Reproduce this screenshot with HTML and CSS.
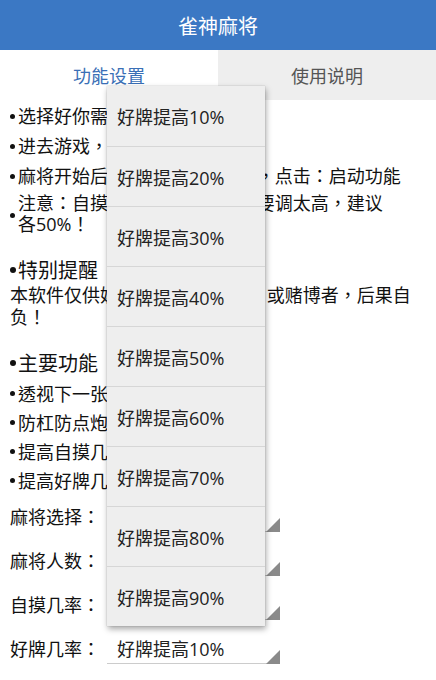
FILE: index.html
```html
<!DOCTYPE html>
<html lang="zh-CN">
<head>
<meta charset="utf-8">
<title>雀神麻将</title>
<link rel="stylesheet" href="styles.css">
</head>
<body>
<header class="titlebar">雀神麻将</header>
<nav class="tabs">
  <div class="tab active">功能设置</div>
  <div class="tab">使用说明</div>
</nav>
<main class="content">
  <div class="item"><span class="dot"></span><span>选择好你需要的麻将和人数</span></div>
  <div class="item"><span class="dot"></span><span>进去游戏，打开悬浮窗</span></div>
  <div class="item"><span class="dot"></span><span>麻将开始后打开悬浮窗口界面 ，点击：启动功能</span></div>
  <div class="item note"><span class="dot"></span><div>注意：自摸几率和好牌几率 不要调太高，建议<br>各50%！</div></div>
  <div class="item heading"><span class="dot"></span><span>特别提醒</span></div>
  <p class="para">本软件仅供娱乐，请勿用于诈骗 或赌博者，后果自负！</p>
  <div class="item heading second"><span class="dot"></span><span>主要功能</span></div>
  <div class="item small"><span class="dot"></span><span>透视下一张牌</span></div>
  <div class="item small"><span class="dot"></span><span>防杠防点炮</span></div>
  <div class="item small"><span class="dot"></span><span>提高自摸几率</span></div>
  <div class="item small"><span class="dot"></span><span>提高好牌几率</span></div>
  <div class="form-row"><span class="label">麻将选择：</span><div class="spinner"><span>血战到底</span></div></div>
  <div class="form-row"><span class="label">麻将人数：</span><div class="spinner"><span>四人</span></div></div>
  <div class="form-row"><span class="label">自摸几率：</span><div class="spinner"><span>自摸提高10%</span></div></div>
  <div class="form-row"><span class="label">好牌几率：</span><div class="spinner"><span>好牌提高10%</span></div></div>
</main>
<div class="dropdown">
  <div class="option">好牌提高10%</div>
  <div class="option">好牌提高20%</div>
  <div class="option">好牌提高30%</div>
  <div class="option">好牌提高40%</div>
  <div class="option">好牌提高50%</div>
  <div class="option">好牌提高60%</div>
  <div class="option">好牌提高70%</div>
  <div class="option">好牌提高80%</div>
  <div class="option">好牌提高90%</div>
</div>
</body>
</html>
```
FILE: styles.css
```css
html, body {
  margin: 0;
  padding: 0;
}
body {
  width: 436px;
  height: 680px;
  overflow: hidden;
  position: relative;
  background: #ffffff;
  color: #111111;
  font-family: "Open Sans", "Noto Sans CJK TC", sans-serif;
  font-feature-settings: "locl" 0;
}
.titlebar {
  height: 50px;
  background: #3b78c4;
  color: #ffffff;
  font-size: 20px;
  display: flex;
  align-items: center;
  justify-content: center;
}
.tabs {
  display: flex;
  height: 50px;
}
.tab {
  flex: 1;
  display: flex;
  align-items: center;
  justify-content: center;
  font-size: 18px;
  color: #555555;
  background: #eeeeee;
}
.tab.active {
  background: #ffffff;
  color: #3a6fb6;
}
.content {
  padding: 0 10px;
}
.item {
  display: flex;
  align-items: center;
  height: 30px;
  font-size: 18px;
  white-space: nowrap;
}
.dot {
  flex: none;
  width: 8px;
  display: flex;
  align-items: center;
}
.dot::before {
  content: "";
  width: 5px;
  height: 5px;
  border-radius: 50%;
  background: #111111;
  margin-top: 2px;
}
.item.note {
  height: auto;
  line-height: 21px;
  padding: 3px 0 19px;
}
.item.heading {
  font-size: 20px;
}
.item.heading .dot::before {
  width: 6px;
  height: 6px;
}
.item.second {
  margin-bottom: 1px;
}
.item.small {
  height: 29px;
}
.para {
  margin: 0 0 19px;
  font-size: 18px;
  line-height: 22px;
}
.form-row {
  display: flex;
  align-items: center;
  height: 44px;
  font-size: 18px;
}
.label {
  width: 97px;
  flex: none;
}
.spinner {
  position: relative;
  width: 173px;
  height: 32px;
  box-sizing: border-box;
  padding-left: 10px;
  border-bottom: 1px solid #cccccc;
  display: flex;
  align-items: center;
  color: #222222;
}
.spinner::after {
  content: "";
  position: absolute;
  right: 0;
  bottom: -1px;
  width: 0;
  height: 0;
  border-left: 14px solid transparent;
  border-bottom: 14px solid #8a8a8a;
}
.dropdown {
  position: absolute;
  left: 107px;
  top: 86px;
  width: 158px;
  background: #eeeeee;
  box-shadow: 1px 3px 6px rgba(0, 0, 0, 0.35), 0 0 1px rgba(0, 0, 0, 0.25);
}
.option {
  height: 60px;
  box-sizing: border-box;
  padding-left: 10px;
  display: flex;
  align-items: center;
  font-size: 18px;
  color: #222222;
  border-top: 1px solid #d6d6d6;
}
.option:first-child {
  border-top: none;
}
```
